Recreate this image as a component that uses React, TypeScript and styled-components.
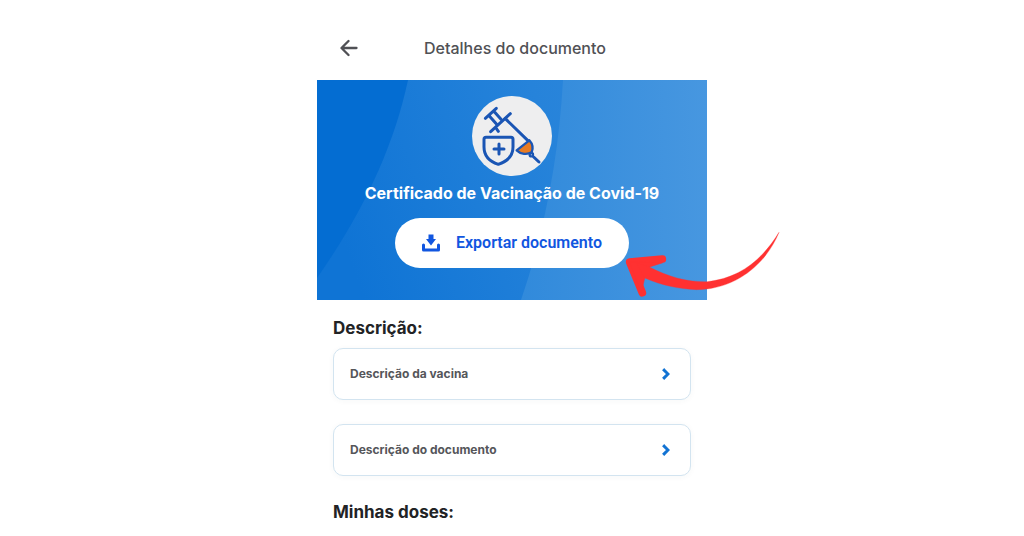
import React from "react";
import styled, { createGlobalStyle } from "styled-components";

const GlobalStyle = createGlobalStyle`
  *, *::before, *::after { box-sizing: border-box; }
  body {
    margin: 0;
    background: #fff;
    font-family: Inter, "Liberation Sans", sans-serif;
    overflow-x: hidden;
  }
  h1, h2, p { margin: 0; }
  button { font: inherit; cursor: pointer; }
`;

const Screen = styled.main`
  width: 100%;
  max-width: 390px;
  margin: 0 auto;
  padding-top: 16px;
`;

const TopBar = styled.header`
  display: grid;
  grid-template-columns: 64px 1fr 58px;
  align-items: center;
  height: 64px;
`;

const BackButton = styled.button`
  display: flex;
  justify-content: center;
  padding: 0;
  border: 0;
  background: none;
`;

const PageTitle = styled.h1`
  text-align: center;
  font-size: 16px;
  line-height: 24px;
  font-weight: 500;
  color: #505155;
  white-space: nowrap;
`;

const Hero = styled.section`
  position: relative;
  display: flex;
  flex-direction: column;
  align-items: center;
  padding: 16px 16px 32px;
`;

const Backdrop = styled.svg`
  position: absolute;
  inset: 0;
  width: 100%;
  height: 100%;
`;

const Badge = styled.svg`
  position: relative;
  width: 80px;
  height: 80px;
  border-radius: 50%;
  background: #eeeeef;
`;

const HeroTitle = styled.h2`
  position: relative;
  margin: 4px 0 12px;
  font-size: 16px;
  line-height: 26px;
  font-weight: 700;
  color: #fff;
  text-align: center;
`;

const ExportButton = styled.button`
  position: relative;
  display: flex;
  align-items: center;
  justify-content: center;
  gap: 16px;
  width: 234px;
  height: 50px;
  border: 0;
  border-radius: 25px;
  background: #fff;
  color: #1156e0;

  span {
    font-family: Roboto, sans-serif;
    font-size: 16px;
    line-height: 24px;
    font-weight: 600;
  }
`;

const Pointer = styled.svg`
  position: absolute;
  right: -83px;
  bottom: -10px;
  width: 180px;
  height: 90px;
  pointer-events: none;
`;

const Content = styled.div`
  padding: 16px;
`;

const SectionTitle = styled.h2`
  font-size: 17px;
  line-height: 24px;
  font-weight: 700;
  color: #222325;
`;

const CardList = styled.div`
  display: grid;
  gap: 24px;
  margin: 8px 0 24px;
`;

const CardButton = styled.button`
  display: flex;
  align-items: center;
  justify-content: space-between;
  width: 100%;
  height: 52px;
  padding: 0 20px 0 16px;
  border: 1px solid #d3e4f0;
  border-radius: 10px;
  background: #fff;
  box-shadow: 0 1px 6px rgba(60, 80, 70, 0.04);

  span {
    font-size: 12px;
    line-height: 16px;
    font-weight: 700;
    color: #55565a;
  }
`;

const SyringeBadge = () => (
  <Badge viewBox="30 24 240 240" aria-hidden="true">
    <g fill="none" stroke="#1a55b4" strokeWidth="9" strokeLinecap="round" strokeLinejoin="round">
      <path d="M70 91 103 61M80 82 104 109M95 69 117 94" />
      <path d="M86 131 145 77M102 120 109 130" />
      <path d="M130 92 200 160" />
      <path d="M164 187 202 157C212 168 214 181 209 193C196 201 176 199 164 187Z" fill="#e87b22" strokeWidth="7" />
      <circle cx="208" cy="200" r="5" fill="#eeeeef" strokeWidth="7" />
      <path d="M215 207 231 222" strokeWidth="9" />
      <path d="M72 148H147Q153 148 153 154V177C153 202 137 220 109 229C81 220 66 202 66 177V154Q66 148 72 148Z" />
      <path d="M111 168V198M96 183H126" strokeWidth="9" />
    </g>
  </Badge>
);

const Chevron = () => (
  <svg width="8" height="12" viewBox="0 0 8 12" fill="none" aria-hidden="true">
    <path d="M2.2 2.2 6 6 2.2 9.8" stroke="#1273d3" strokeWidth="3" strokeLinecap="square" />
  </svg>
);

const descriptions = ["Descrição da vacina", "Descrição do documento"];

export default function App() {
  return (
    <>
      <GlobalStyle />
      <Screen>
        <TopBar>
          <BackButton aria-label="Voltar">
            <svg width="18" height="18" viewBox="0 0 18 18" fill="none" stroke="#505155" strokeWidth="2.3" strokeLinecap="round" strokeLinejoin="round">
              <path d="M16.5 9H2M8.5 2 1.5 9 8.5 16" />
            </svg>
          </BackButton>
          <PageTitle>Detalhes do documento</PageTitle>
        </TopBar>
        <Hero>
          <Backdrop viewBox="0 0 390 220" preserveAspectRatio="none" aria-hidden="true">
            <defs>
              <linearGradient id="middle" x1="0" x2="1" y1="0.4" y2="0.2">
                <stop offset="0" stopColor="#0f74d5" />
                <stop offset="0.6" stopColor="#2683da" />
                <stop offset="1" stopColor="#3189dc" />
              </linearGradient>
              <linearGradient id="right" x1="0" x2="1">
                <stop offset="0" stopColor="#318adb" />
                <stop offset="1" stopColor="#4797e0" />
              </linearGradient>
            </defs>
            <path d="M0 0H390V220H0Z" fill="url(#middle)" />
            <path d="M0 0H91C76 70 44 135 0 198Z" fill="#046dd2" />
            <path d="M246 0H390V220H204C228 150 242 75 246 0Z" fill="url(#right)" />
          </Backdrop>
          <SyringeBadge />
          <HeroTitle>Certificado de Vacinação de Covid-19</HeroTitle>
          <ExportButton>
            <svg width="18" height="18" viewBox="0 0 18 18" fill="currentColor" aria-hidden="true">
              <path d="M6.5 0.5H11.5V5H14L9 11.5 4 5H6.5Z" />
              <path d="M1.5 11V16H16.5V11" fill="none" stroke="currentColor" strokeWidth="3" strokeLinejoin="round" strokeLinecap="round" />
            </svg>
            <span>Exportar documento</span>
          </ExportButton>
          <Pointer viewBox="0 0 540 270" aria-hidden="true">
            <g fill="#ff3131" stroke="#ff3131" strokeLinejoin="round" strokeLinecap="round">
              <path d="M157 117 59 126 97 218" fill="none" strokeWidth="23" />
              <path d="M60 126 158 128 118 141 104 174 94 218Z" strokeWidth="2" />
              <path d="M80 128 118 141C176 171 234 187 292 185C388 174 455 122 507 37C468 132 378 208 260 209C206 207 154 196 104 174Z" strokeWidth="1" />
            </g>
          </Pointer>
        </Hero>
        <Content>
          <SectionTitle>Descrição:</SectionTitle>
          <CardList>
            {descriptions.map((label) => (
              <CardButton key={label}>
                <span>{label}</span>
                <Chevron />
              </CardButton>
            ))}
          </CardList>
          <SectionTitle>Minhas doses:</SectionTitle>
        </Content>
      </Screen>
    </>
  );
}
